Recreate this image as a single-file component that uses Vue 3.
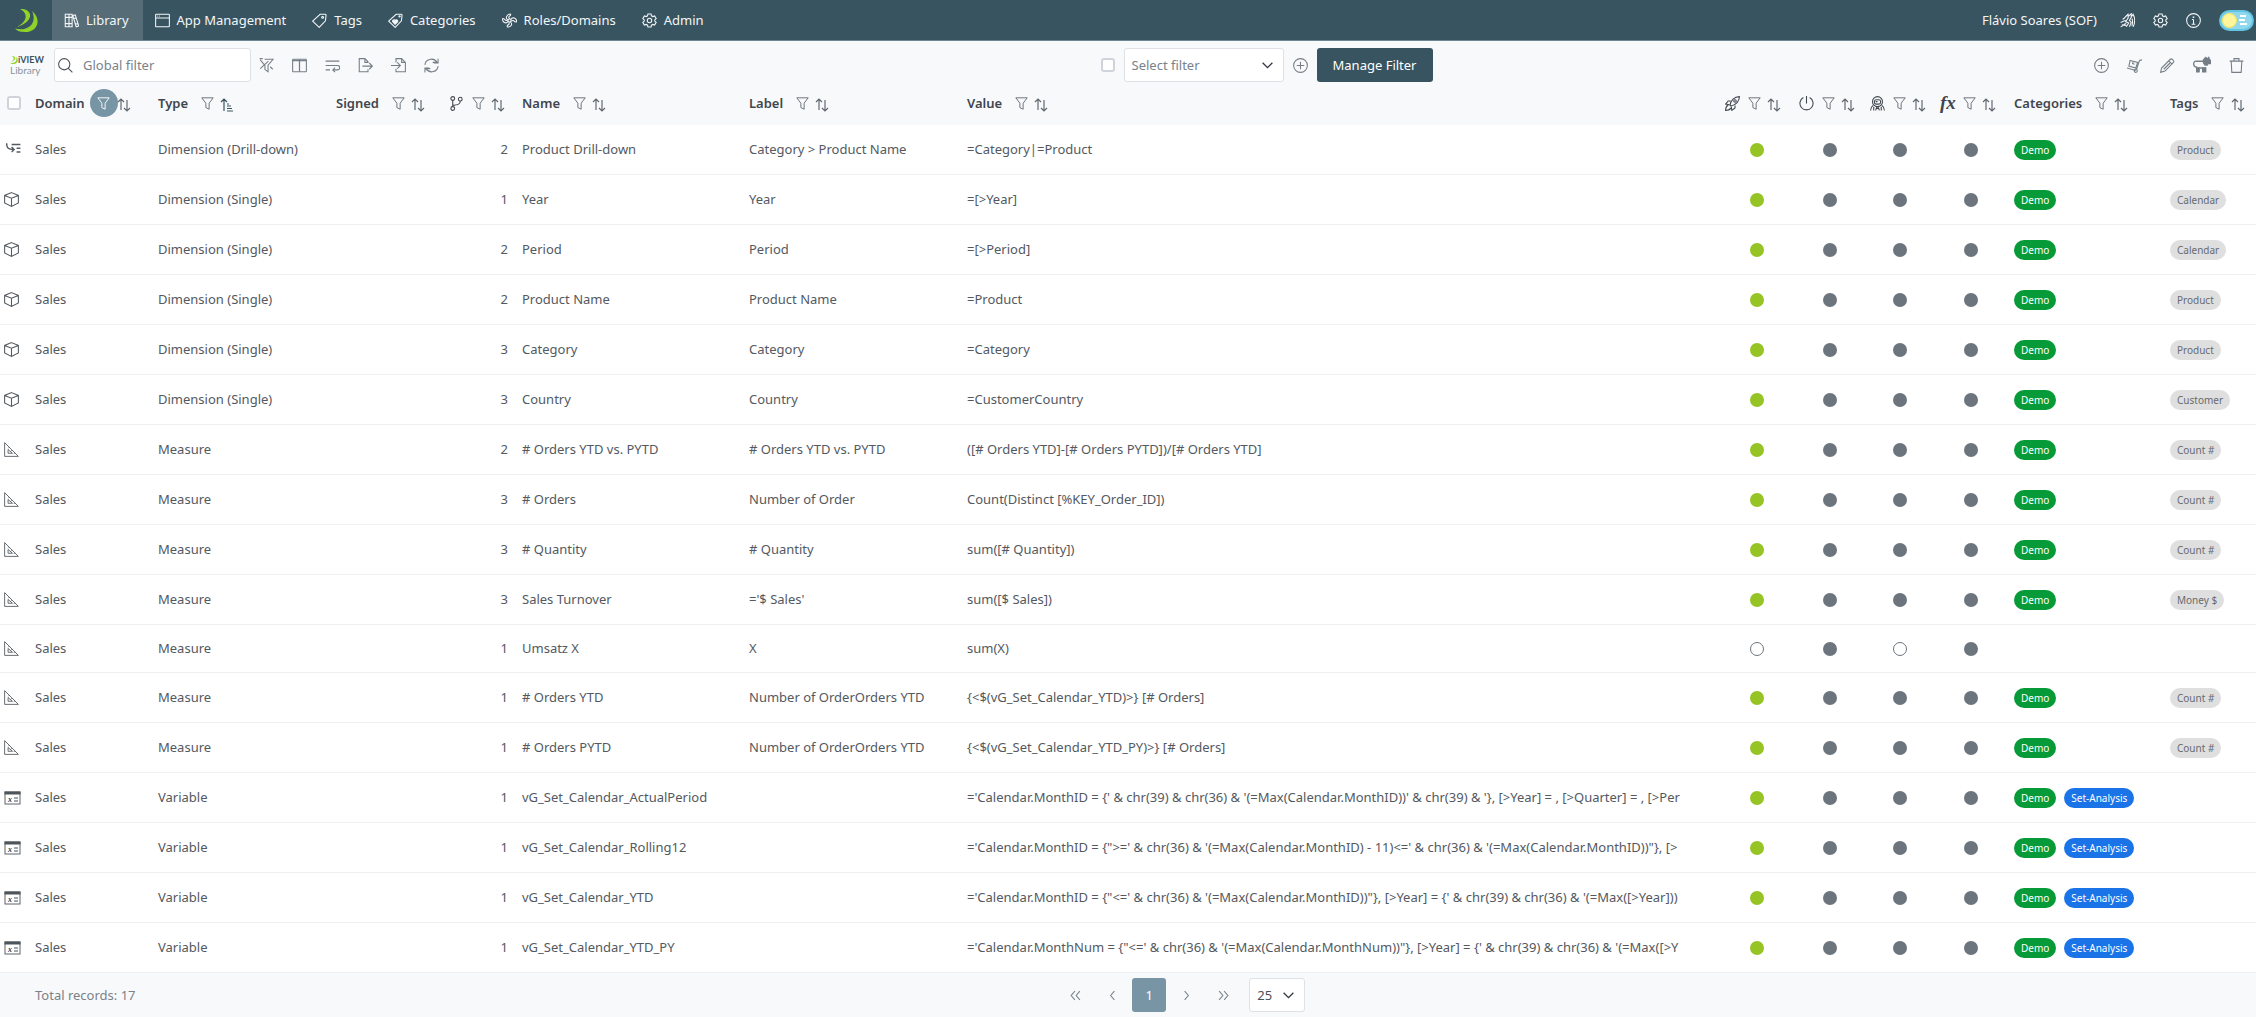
<script setup>
import { ref } from 'vue'

const icons = {
  books: '<path d="M2 2h6v20H2zM8 2h5v20H8zM2 7h11M2 17h11M14 4l4-1 5.500 18-4 1zM15.500 9l4-1M18 18l4-1"/>',
  window: '<rect x="1" y="2" width="22" height="20" rx="1"/><path d="M1 8h22M4 5h1M7 5h1"/>',
  tag: '<path d="M13 2h8a1.500 1.500 0 0 1 1.500 1.500l-1 9L11.500 23 1 13z"/><circle cx="17" cy="7" r="1.500"/>',
  tagheart: '<path d="M13 2h8a1.500 1.500 0 0 1 1.500 1.500l-1 9L11.500 23 1 13z"/><circle cx="18.500" cy="5.500" r="1"/><path fill="currentColor" d="M11.500 18l-4-4c-1-3 3-4 4-1.500 1-2.500 5-1.500 4 1.500z"/>',
  swirl: '<circle cx="12" cy="12" r="2.500"/><path d="M9.500 11C5 9 7 2 13 1.500c1.500 0 1 2.500-1 3.500-2 1-1 3 .5 4.500M14 10.500c3-5 9-2 9.500 2.500 0 2-3 1.500-4 0-1.500-2-3-1-5 .5M13.500 14.500c4 3 1 8-4 8-2 0-1.500-3 .5-3.500 2-1 1.500-3 1-4.500M10 13.500C6 18 1 15 .8 10c0-2 2.500-1.500 3.500.5s3 1.500 5 1.500"/>',
  gear: '<circle cx="12" cy="12" r="3.500"/><path d="M9.500 1.500h5l.7 3 2 1.200 3-1 2.500 4.300-2.300 2v2l2.300 2-2.500 4.300-3-1-2 1.200-.7 3h-5l-.7-3-2-1.200-3 1L1.300 15l2.300-2v-2l-2.300-2 2.500-4.300 3 1 2-1.200z"/>',
  flock: '<path d="M1 22c5-1 4-4 9-5M1 15c4 0 4-3 8-3M4 10c3 0 5-5 9-8v6l-4 6 5 2-4 6M14 5l4-4v6l-3 5 3 3-3 7M19 5l2-3c3 6 3 14 0 20M19 9c2 3 1 8 0 12M3 19l7 1"/>',
  info: '<circle cx="12" cy="12" r="11"/><path d="M12 10.500V18M9 18h6M9.500 10.500H12"/><path d="M12 5.500v2.500" stroke-width="2.500"/>',
  search: '<circle cx="10" cy="10" r="9"/><path d="M16.500 16.500L23 23"/>',
  filter: '<path d="M1.500 1.500h21L15 11.500v11l-6-3v-8z"/>',
  filteroff: '<path d="M9 2h13.500l-8 9.500V22l-5-3.500V12L2 3M1 1h5M15 5L2 17M18 14l4 4"/>',
  columns: '<rect x="1" y="2" width="22" height="20" rx="1"/><path d="M12 2v20M1 4h22" stroke-width="2"/>',
  wrap: '<path d="M1 5h22M1 12h19a3.500 3.500 0 0 1 0 7h-7M1 19h7M16 15.500L12.500 19l3.500 3.500"/>',
  exportf: '<path d="M16 8V6l-5-5H2v21h14v-4M11 1v6h5M7 13h16M18 8l5 5-5 5"/>',
  importf: '<path d="M8 7V1h9l6 6v15H8v-5M17 1v6h6M0 12h15M10 7l5 5-5 5"/>',
  sync: '<path d="M1.500 11C2 2 15-2 21 7h-7M22.500 1v7h-7M22.500 13c-.5 9-13.500 13-19.500 4h7M1.500 23v-7h7"/>',
  plus: '<circle cx="12" cy="12" r="11"/><path d="M12 6v12M6 12h12"/>',
  dolly: '<path d="M24 3l-4 1-5 15M0 16l14 4M5 4l12 3-3 9-11-3zM10 5l-1 4 3 1"/><circle cx="14" cy="20.500" r="2.500"/>',
  pencil: '<path d="M1 23l1.500-7L16.500 2c2-2 7 3 5 5L8 21zM14 4.500l5 5M16 8L6 18"/>',
  sheep: '<path d="M16 15v5h-3v-4H8v4H5v-5C-1 14 0 6 5 7h10"/><path fill="currentColor" d="M5 16h3v5H5zM13 16h4v5h-4zM14 5l3-3 2 2 2-2 1 3 2 1v4h-4l-1 2h-3l-2-3z"/>',
  trash: '<path d="M1 5h22M8 5V1h8v4M3.500 5l1 18h15l1-18"/>',
  branch: '<circle cx="6" cy="4" r="3"/><circle cx="6" cy="20" r="3"/><circle cx="18" cy="5" r="3"/><path d="M6 7v10M18 8c0 5-3 6-12 7"/>',
  rocket: '<path d="M8 15C9 7 15 1 23 1c0 8-6 14-14 15zM9 8H5l-4 5 6 1M16 15v4l-5 4-1-6M4 16c-3 1-3 4-3 7 3 0 6 0 7-3M10 19l-3 3M5 14l-3 3"/><circle cx="16" cy="8" r="2"/>',
  power: '<path d="M12 0v12M7 2.500a10.500 10.500 0 1 0 10 0"/>',
  astro: '<circle cx="12" cy="9" r="8"/><rect x="7" y="6" width="10" height="7" rx="3"/><path d="M5 15c-3 2-4 4-4 8M19 15c3 2 4 4 4 8M6 17v6M18 17v6M10 18l2 2 2-2M9 23l1-3h4l1 3M9 9h3"/>',
  drill: '<path d="M1 2c0 8 3 10 11 10M9 8l4 4-4 4M9 4h14M17 10h6M17 16h6"/>',
  cube: '<path d="M12 1l11 4.500v12L12 23 1 17.500v-12zM1 5.500L12 10l11-4.500M12 10v13"/>',
  triangle: '<path d="M1 1v22h22zM6.500 12v6h7zM13 13l-2 2M9 8l-2 2M17 17l-1 2"/>',
  first: '<path d="M11 5l-6 7 6 7M19 5l-6 7 6 7"/>',
  prev: '<path d="M15 5l-6 7 6 7"/>',
  next: '<path d="M9 5l6 7-6 7"/>',
  last: '<path d="M5 5l6 7-6 7M13 5l6 7-6 7"/>',
  chevron: '<path d="M3 7l9 9 9-9"/>',
}
const leaf = '<path d="M20 8C32 7 36 20 17 26c11-6 11-14 3-18z"/><path d="M32 10c10 8 6 21-7 21-5 0-8-1-10-3.500C27 31 38 23 32 10z"/>'

const nav = [
  { label: 'Library', icon: 'books', active: true },
  { label: 'App Management', icon: 'window' },
  { label: 'Tags', icon: 'tag' },
  { label: 'Categories', icon: 'tagheart' },
  { label: 'Roles/Domains', icon: 'swirl' },
  { label: 'Admin', icon: 'gear' },
]
const userTools = [['flock', 'Team'], ['gear', 'Settings'], ['info', 'About']]
const leftTools = [
  ['filteroff', 'Clear filters'], ['columns', 'Columns'], ['wrap', 'Wrap text'],
  ['exportf', 'Export'], ['importf', 'Import'], ['sync', 'Refresh'],
]
const rightTools = [['plus', 'Add'], ['dolly', 'Move'], ['pencil', 'Edit'], ['sheep', 'Clone'], ['trash', 'Delete']]

const columns = [
  { key: 'domain', label: 'Domain', filtered: true },
  { key: 'type', label: 'Type', sorted: true },
  { key: 'signed', label: 'Signed' },
  { key: 'version', icon: 'branch', title: 'Version' },
  { key: 'name', label: 'Name' },
  { key: 'labelcol', label: 'Label' },
  { key: 'value', label: 'Value' },
  { key: 's1', icon: 'rocket', title: 'Published', state: true },
  { key: 's2', icon: 'power', title: 'Active', state: true },
  { key: 's3', icon: 'astro', title: 'Personal', state: true },
  { key: 's4', fx: true, title: 'Formula', state: true },
  { key: 'categories', label: 'Categories' },
  { key: 'tags', label: 'Tags' },
]

const single = 'Dimension (Single)'
const on = ['green', 'gray', 'gray', 'gray']
const make = (icon, type, version, name, label, value, cats, tag, dots = on) =>
  ({ icon, type, version, name, label, value, cats, tag, dots })
const rows = [
  make('drill', 'Dimension (Drill-down)', 2, 'Product Drill-down', 'Category > Product Name', '=Category|=Product', ['Demo'], 'Product'),
  make('cube', single, 1, 'Year', 'Year', '=[>Year]', ['Demo'], 'Calendar'),
  make('cube', single, 2, 'Period', 'Period', '=[>Period]', ['Demo'], 'Calendar'),
  make('cube', single, 2, 'Product Name', 'Product Name', '=Product', ['Demo'], 'Product'),
  make('cube', single, 3, 'Category', 'Category', '=Category', ['Demo'], 'Product'),
  make('cube', single, 3, 'Country', 'Country', '=CustomerCountry', ['Demo'], 'Customer'),
  make('triangle', 'Measure', 2, '# Orders YTD vs. PYTD', '# Orders YTD vs. PYTD', '([# Orders YTD]-[# Orders PYTD])/[# Orders YTD]', ['Demo'], 'Count #'),
  make('triangle', 'Measure', 3, '# Orders', 'Number of Order', 'Count(Distinct [%KEY_Order_ID])', ['Demo'], 'Count #'),
  make('triangle', 'Measure', 3, '# Quantity', '# Quantity', 'sum([# Quantity])', ['Demo'], 'Count #'),
  make('triangle', 'Measure', 3, 'Sales Turnover', "='$ Sales'", 'sum([$ Sales])', ['Demo'], 'Money $'),
  make('triangle', 'Measure', 1, 'Umsatz X', 'X', 'sum(X)', [], '', ['empty', 'gray', 'empty', 'gray']),
  make('triangle', 'Measure', 1, '# Orders YTD', 'Number of OrderOrders YTD', '{<$(vG_Set_Calendar_YTD)>} [# Orders]', ['Demo'], 'Count #'),
  make('triangle', 'Measure', 1, '# Orders PYTD', 'Number of OrderOrders YTD', '{<$(vG_Set_Calendar_YTD_PY)>} [# Orders]', ['Demo'], 'Count #'),
  make('variable', 'Variable', 1, 'vG_Set_Calendar_ActualPeriod', '', "='Calendar.MonthID = {' & chr(39) & chr(36) & '(=Max(Calendar.MonthID))' & chr(39) & '}, [>Year] = , [>Quarter] = , [>Per", ['Demo', 'Set-Analysis'], ''),
  make('variable', 'Variable', 1, 'vG_Set_Calendar_Rolling12', '', "='Calendar.MonthID = {\">=' & chr(36) & '(=Max(Calendar.MonthID) - 11)<=' & chr(36) & '(=Max(Calendar.MonthID))\"}, [>", ['Demo', 'Set-Analysis'], ''),
  make('variable', 'Variable', 1, 'vG_Set_Calendar_YTD', '', "='Calendar.MonthID = {\"<=' & chr(36) & '(=Max(Calendar.MonthID))\"}, [>Year] = {' & chr(39) & chr(36) & '(=Max([>Year]))", ['Demo', 'Set-Analysis'], ''),
  make('variable', 'Variable', 1, 'vG_Set_Calendar_YTD_PY', '', "='Calendar.MonthNum = {\"<=' & chr(36) & '(=Max(Calendar.MonthNum))\"}, [>Year] = {' & chr(39) & chr(36) & '(=Max([>Y", ['Demo', 'Set-Analysis'], ''),
]

const search = ref('')
</script>

<template>
  <div class="page">
    <header class="topbar">
      <svg class="brand leaf" viewBox="15 8 23 23" aria-label="DiView" role="img" v-html="leaf" />
      <nav class="menu">
        <a v-for="n in nav" :key="n.label" href="#" :class="{ active: n.active }">
          <svg class="icon" viewBox="0 0 24 24" v-html="icons[n.icon]" />
          <span>{{ n.label }}</span>
        </a>
      </nav>
      <div class="user">
        <span>Flávio Soares (SOF)</span>
        <button v-for="[icon, label] in userTools" :key="label" :aria-label="label">
          <svg class="icon" viewBox="0 0 24 24" v-html="icons[icon]" />
        </button>
        <button class="theme" aria-label="Toggle theme">
          <i class="sun"></i>
          <svg viewBox="0 0 8 10"><path d="M1 1h6M0 5h6M1 9h7" /></svg>
        </button>
      </div>
    </header>

    <div class="toolbar">
      <div class="group left">
        <div class="logo">
          <div class="logo-top">
            <svg class="leaf" viewBox="15 8 23 23" v-html="leaf" />
            <b>iVIEW</b>
          </div>
          <span>Library</span>
        </div>
        <label class="search">
          <svg class="icon" viewBox="0 0 24 24" v-html="icons.search" />
          <input v-model="search" type="text" placeholder="Global filter" aria-label="Global filter">
        </label>
        <div class="tools">
          <button v-for="[icon, label] in leftTools" :key="label" :aria-label="label">
            <svg class="icon" viewBox="0 0 24 24" v-html="icons[icon]" />
          </button>
        </div>
      </div>
      <div class="group middle">
        <input type="checkbox" aria-label="Apply filter">
        <div class="select">
          <select aria-label="Select filter"><option>Select filter</option></select>
          <svg class="chevron" viewBox="0 0 24 24" v-html="icons.chevron" />
        </div>
        <button aria-label="Add filter">
          <svg class="icon" viewBox="0 0 24 24" v-html="icons.plus" />
        </button>
        <button class="primary">Manage Filter</button>
      </div>
      <div class="group right">
        <button v-for="[icon, label] in rightTools" :key="label" :aria-label="label">
          <svg class="icon" :class="icon" viewBox="0 0 24 24" v-html="icons[icon]" />
        </button>
      </div>
    </div>

    <table>
      <colgroup>
        <col class="c-icon">
        <col v-for="c in columns" :key="c.key" :class="'c-' + c.key">
      </colgroup>
      <thead>
        <tr>
          <th><div class="head"><input type="checkbox" aria-label="Select all"></div></th>
          <th v-for="c in columns" :key="c.key" scope="col" :aria-label="c.title" :class="{ 'state-head': c.state }">
            <div class="head">
              <span v-if="c.label" class="title">{{ c.label }}</span>
              <span v-else-if="c.fx" class="fx">fx</span>
              <svg v-else class="icon" viewBox="0 0 24 24" v-html="icons[c.icon]" />
              <button class="funnel" :class="{ filtered: c.filtered }" aria-label="Filter">
                <svg viewBox="0 0 24 24" v-html="icons.filter" />
              </button>
              <button class="sort" :class="{ sorted: c.sorted }" aria-label="Sort">
                <svg v-if="c.sorted" viewBox="0 0 12 14"><path d="M3 13V1M0 4l3-3 3 3M6 6h2M6 8h4M6 10.500h5M6 13h6" /></svg>
                <svg v-else viewBox="0 0 12 14"><path d="M3 12V1M0 4l3-3 3 3M9 2v11M6 10l3 3 3-3" /></svg>
              </button>
            </div>
          </th>
        </tr>
      </thead>
      <tbody>
        <tr v-for="r in rows" :key="r.name">
          <td class="kind">
            <svg v-if="r.icon === 'variable'" class="variable" viewBox="0 0 17 14">
              <rect x="1" y="1" width="15" height="12" fill="none" stroke="#5c656d" />
              <rect x="1" y="1" width="15" height="2" fill="#495057" />
              <text x="4" y="11">x</text>
              <path d="M10 7h4M10 10h4" stroke="#495057" />
            </svg>
            <svg v-else class="icon" :class="r.icon" viewBox="0 0 24 24" v-html="icons[r.icon]" />
          </td>
          <td>Sales</td>
          <td>{{ r.type }}</td>
          <td></td>
          <td class="num">{{ r.version }}</td>
          <td>{{ r.name }}</td>
          <td>{{ r.label }}</td>
          <td class="value">{{ r.value }}</td>
          <td v-for="(d, i) in r.dots" :key="i" class="state"><i class="dot" :class="d"></i></td>
          <td>
            <div v-if="r.cats.length" class="chips">
              <span v-for="c in r.cats" :key="c" class="chip" :class="c === 'Demo' ? 'demo' : 'set'">{{ c }}</span>
            </div>
          </td>
          <td>
            <div v-if="r.tag" class="chips"><span class="chip">{{ r.tag }}</span></div>
          </td>
        </tr>
      </tbody>
    </table>

    <footer>
      <span>Total records: 17</span>
      <div class="pager">
        <button aria-label="First page"><svg class="icon" viewBox="0 0 24 24" v-html="icons.first" /></button>
        <button aria-label="Previous page"><svg class="icon" viewBox="0 0 24 24" v-html="icons.prev" /></button>
        <button class="current">1</button>
        <button aria-label="Next page"><svg class="icon" viewBox="0 0 24 24" v-html="icons.next" /></button>
        <button aria-label="Last page"><svg class="icon" viewBox="0 0 24 24" v-html="icons.last" /></button>
        <div class="select size">
          <select aria-label="Rows per page"><option>25</option></select>
          <svg class="chevron" viewBox="0 0 24 24" v-html="icons.chevron" />
        </div>
      </div>
    </footer>
  </div>
</template>

<style>
body {
  background: #f8f9fb;
}
</style>

<style scoped>
.page {
  font: 13px/19px "Segoe UI", "Noto Sans", sans-serif;
  color: #53595f;
}
button {
  display: flex;
  align-items: center;
  justify-content: center;
  border: 0;
  padding: 0;
  background: none;
  color: inherit;
  font: inherit;
}
svg {
  display: block;
  flex: none;
  fill: none;
  stroke: currentColor;
  stroke-width: 1.7;
}
.icon {
  width: 15px;
  height: 15px;
}
.leaf {
  fill: #8fd32a;
  stroke: none;
}
.topbar {
  display: flex;
  align-items: center;
  height: 40px;
  background: #385461;
  border-bottom: 1px solid #6d8794;
  color: #f4f6f7;
}
.brand {
  width: 23px;
  height: 23px;
  margin: 0 14px 0 15px;
}
.menu {
  display: flex;
  align-self: stretch;
}
.menu a {
  display: flex;
  align-items: center;
  gap: 7px;
  padding: 0 14px 0 12px;
  color: inherit;
  text-decoration: none;
}
.menu a.active {
  background: #566c77;
}
.user {
  display: flex;
  align-items: center;
  gap: 18px;
  margin-left: auto;
  padding-right: 2px;
}
.user span {
  margin-right: 5px;
}
.user .theme {
  width: 35px;
  height: 21px;
  box-sizing: border-box;
  justify-content: space-between;
  padding: 0 5px 0 1px;
  border: 2px solid #62c3e3;
  border-radius: 11px;
  background: #8fd8ee;
}
.sun {
  box-sizing: border-box;
  width: 15px;
  height: 15px;
  border: 1px solid #f7e25a;
  border-radius: 50%;
  background: #fff59a;
}
.theme svg {
  width: 8px;
  height: 10px;
  stroke: #fff;
  stroke-width: 2;
}
.toolbar {
  display: flex;
  align-items: center;
  justify-content: space-between;
  padding: 7px 12px 7px 10px;
  color: #757e86;
}
.group {
  display: flex;
  align-items: center;
}
.logo {
  width: 36px;
  margin-right: 8px;
  line-height: 10px;
  color: #8a949c;
  font-family: Lato, sans-serif;
  font-size: 10px;
}
.logo-top {
  display: flex;
  align-items: center;
  color: #385461;
  font-size: 9px;
}
.logo-top svg {
  width: 8px;
  height: 8px;
}
.search {
  display: flex;
  align-items: center;
  gap: 10px;
  box-sizing: border-box;
  width: 197px;
  height: 34px;
  padding: 0 3px;
  border: 1px solid #dee2e6;
  border-radius: 3px;
  background: #fff;
  color: #495057;
}
.search input {
  min-width: 0;
  flex: 1;
  padding: 0;
  border: 0;
  outline: 0;
  font: inherit;
}
.search input::placeholder {
  color: #79828a;
}
.tools {
  display: flex;
  gap: 18px;
  margin-left: 8px;
}
.middle {
  gap: 9px;
}
input[type='checkbox'] {
  appearance: none;
  width: 14px;
  height: 14px;
  margin: 0;
  border: 2px solid #ced4da;
  border-radius: 3px;
  background: #fff;
}
.select {
  display: grid;
  align-items: center;
  width: 160px;
  height: 34px;
}
.select > * {
  grid-area: 1 / 1;
}
.select select {
  width: 100%;
  height: 100%;
  appearance: none;
  padding: 0 7px;
  border: 1px solid #dee2e6;
  border-radius: 3px;
  background: #fff;
  color: #79828a;
  font: inherit;
}
.chevron {
  justify-self: end;
  width: 13px;
  height: 13px;
  margin-right: 10px;
  color: #343a40;
  stroke-width: 2.5;
  pointer-events: none;
}
.primary {
  width: 116px;
  height: 34px;
  border-radius: 3px;
  background: #385461;
  color: #fff;
}
.right {
  gap: 18px;
}
.sheep {
  width: 18px;
  height: 18px;
}
table {
  width: 100%;
  table-layout: fixed;
  border-collapse: separate;
  border-spacing: 0;
}
.c-icon { width: 28px; }
.c-domain { width: 123px; }
.c-type { width: 178px; }
.c-signed { width: 113px; }
.c-version { width: 73px; }
.c-name { width: 227px; }
.c-labelcol { width: 218px; }
.c-s1 { width: 74px; }
.c-s2 { width: 71px; }
.c-s3 { width: 70px; }
.c-s4 { width: 72px; }
.c-categories { width: 156px; }
.c-tags { width: 93px; }
th {
  padding: 0 0 8px 7px;
  color: #3f464d;
  font-weight: 600;
  text-align: left;
}
th.state-head {
  padding-left: 5px;
}
.head {
  display: flex;
  align-items: center;
  height: 28px;
}
.title {
  margin-right: 5px;
}
.fx {
  width: 15px;
  font: italic bold 19px/20px "Liberation Serif", serif;
}
.funnel {
  width: 28px;
  height: 28px;
  border-radius: 50%;
  color: #616a72;
}
.funnel svg {
  width: 13px;
  height: 13px;
}
.funnel.filtered {
  background: #7895a5;
  color: #fff;
}
.sort {
  padding-top: 3px;
  color: #616a72;
}
.sort svg {
  width: 12px;
  height: 14px;
  stroke-width: 1.2;
  overflow: visible;
}
.sort.sorted {
  color: #385461;
}
td {
  padding: 14px 0 14px 7px;
  border-bottom: 1px solid #eff0f2;
  background: #fff;
  white-space: nowrap;
}
td.kind {
  padding-left: 4px;
}
.kind .drill {
  margin-left: 2px;
  stroke-width: 2.2;
}
.kind .triangle {
  stroke-width: 1.4;
}
.kind .variable {
  width: 17px;
  height: 14px;
  stroke-width: 1;
}
.variable text {
  fill: #343a40;
  stroke: none;
  font: italic bold 8px "Liberation Serif", serif;
}
td.num {
  padding-right: 7px;
  text-align: right;
}
.value {
  overflow: hidden;
}
td.state {
  padding-left: 0;
}
.dot {
  display: block;
  box-sizing: border-box;
  width: 14px;
  height: 14px;
  margin: 0 auto;
  border-radius: 50%;
  background: #6c757d;
}
.dot.green {
  background: #95c424;
}
.dot.empty {
  border: 1px solid #6c757d;
  background: none;
}
.chips {
  display: flex;
  align-items: center;
  gap: 8px;
  height: 21px;
}
.chip {
  padding: 0 7px;
  border-radius: 10px;
  background: #dfdfdf;
  color: #666b70;
  font-size: 10px;
  line-height: 20px;
}
.chip.demo {
  background: #079a38;
  color: #fff;
}
.chip.set {
  background: #1b73e8;
  color: #fff;
}
footer {
  display: flex;
  align-items: center;
  padding: 5px 28px 5px 35px;
  color: #79828a;
}
.pager {
  display: flex;
  flex: 1;
  justify-content: center;
  gap: 3px;
}
.pager button {
  width: 34px;
  height: 34px;
  border-radius: 3px;
}
.pager .current {
  background: #7895a5;
  color: #fff;
}
.pager .size {
  width: 56px;
  margin-left: 6px;
}
.size select {
  color: #495057;
}
</style>
